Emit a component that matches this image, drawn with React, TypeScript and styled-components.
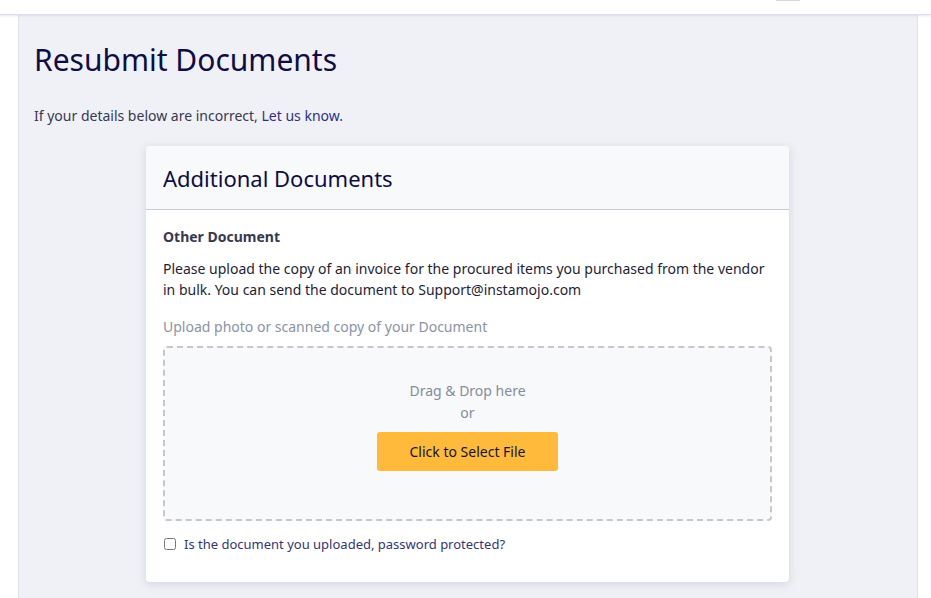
import React from "react";
import styled, { createGlobalStyle } from "styled-components";

const Global = createGlobalStyle`
  html, body { margin: 0; padding: 0; background: #ffffff; }
  body { font-family: "Noto Sans", "Open Sans", sans-serif; }
  * { box-sizing: border-box; }
`;

const TopBar = styled.header`
  height: 15px;
  background: #ffffff;
  border-bottom: 1px solid #dcdfe8;
  box-shadow: 0 1px 2px rgba(180, 186, 205, 0.35);
  position: relative;
`;

const TopTab = styled.span`
  position: absolute;
  left: 776px;
  top: 0;
  width: 24px;
  height: 1px;
  background: #d6d8de;
`;

const Page = styled.main`
  margin: 0 13px 0 18px;
  min-height: 583px;
  background: #f0f1f6;
  border-left: 1px solid #e0e2ea;
  border-right: 1px solid #e0e2ea;
  padding: 24px 15px 16px 15px;
`;

const Title = styled.h1`
  margin: 0;
  font-size: 30px;
  font-weight: 400;
  line-height: 42px;
  color: #0e0d47;
`;

const Intro = styled.p`
  margin: 25px 0 0 0;
  font-size: 14px;
  line-height: 20px;
  color: #363850;
`;

const Link = styled.a`
  color: #2e2f8c;
  text-decoration: none;
`;

const Card = styled.section`
  width: 643px;
  margin: 20px 0 0 112px;
  background: #ffffff;
  border-radius: 4px;
  box-shadow: 0 2px 8px rgba(170, 178, 200, 0.45);
`;

const CardHeader = styled.div`
  height: 64px;
  background: #f8f9fb;
  border-bottom: 1px solid #c9ccd6;
  border-radius: 4px 4px 0 0;
  padding: 0 17px;
  display: flex;
  align-items: center;
`;

const CardTitle = styled.h2`
  margin: 0;
  font-size: 22px;
  font-weight: 400;
  color: #0e0d47;
`;

const CardBody = styled.div`
  padding: 17px 17px 29px 17px;
`;

const DocName = styled.h3`
  margin: 0;
  font-size: 14px;
  font-weight: 700;
  line-height: 20px;
  color: #383852;
`;

const DocText = styled.p`
  margin: 11px 0 0 0;
  font-size: 14px;
  line-height: 21px;
  color: #1e1e36;
`;

const UploadLabel = styled.div`
  margin-top: 17px;
  font-size: 14px;
  line-height: 20px;
  color: #8a93a6;
`;

const DropZone = styled.div`
  margin-top: 9px;
  height: 175px;
  border: 2px dashed #c6c7cb;
  border-radius: 4px;
  background: #f8f9fb;
  display: flex;
  flex-direction: column;
  align-items: center;
  padding-top: 32px;
`;

const DropText = styled.div`
  font-size: 14px;
  line-height: 22px;
  color: #858c9c;
`;

const SelectButton = styled.button`
  margin-top: 8px;
  width: 181px;
  height: 39px;
  border: none;
  border-radius: 3px;
  background: #ffb93b;
  font-family: inherit;
  font-size: 14px;
  color: #14142a;
  cursor: pointer;
`;

const CheckRow = styled.label`
  margin-top: 14px;
  display: flex;
  align-items: center;
  gap: 8px;
  font-size: 13px;
  color: #343478;
`;

const Check = styled.input`
  margin: 0 0 0 1px;
  width: 12px;
  height: 12px;
`;

export default function App() {
  return (
    <>
      <Global />
      <TopBar>
        <TopTab />
      </TopBar>
      <Page>
        <Title>Resubmit Documents</Title>
        <Intro>
          If your details below are incorrect, <Link href="#">Let us know.</Link>
        </Intro>
        <Card>
          <CardHeader>
            <CardTitle>Additional Documents</CardTitle>
          </CardHeader>
          <CardBody>
            <DocName>Other Document</DocName>
            <DocText>
              Please upload the copy of an invoice for the procured items you purchased from the vendor
              in bulk. You can send the document to Support@instamojo.com
            </DocText>
            <UploadLabel>Upload photo or scanned copy of your Document</UploadLabel>
            <DropZone>
              <DropText>Drag &amp; Drop here</DropText>
              <DropText>or</DropText>
              <SelectButton type="button">Click to Select File</SelectButton>
            </DropZone>
            <CheckRow>
              <Check type="checkbox" />
              Is the document you uploaded, password protected?
            </CheckRow>
          </CardBody>
        </Card>
      </Page>
    </>
  );
}
